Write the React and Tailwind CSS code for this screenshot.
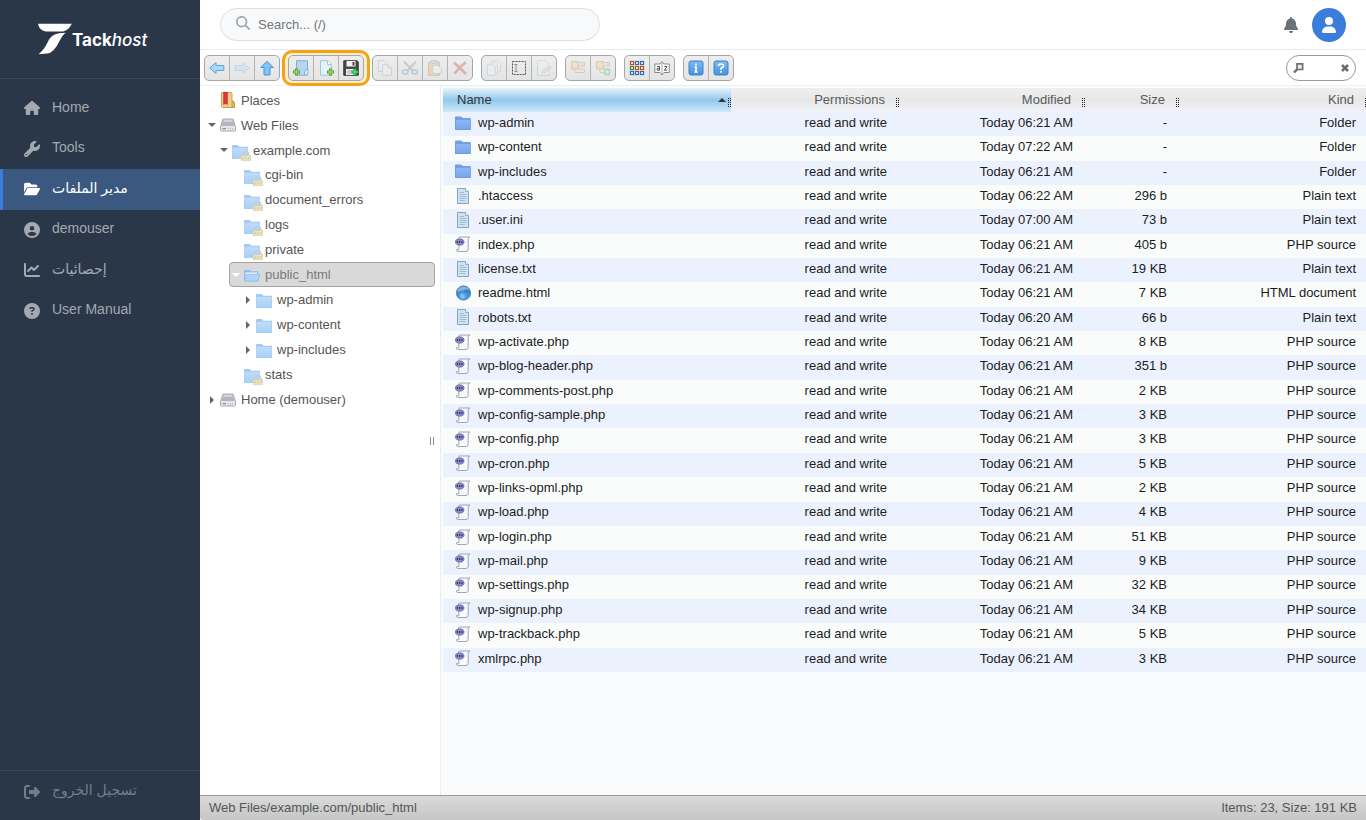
import clsx from "clsx";
import {
	FaBell,
	FaChartLine,
	FaCircleQuestion,
	FaCircleUser,
	FaFolderOpen,
	FaHouse,
	FaMagnifyingGlass,
	FaRightFromBracket,
	FaUser,
	FaWrench,
} from "react-icons/fa6";

const navItems = [
	{ label: "Home", icon: FaHouse },
	{ label: "Tools", icon: FaWrench },
	{ label: "مدير الملفات", icon: FaFolderOpen, active: true },
	{ label: "demouser", icon: FaCircleUser },
	{ label: "إحصائيات", icon: FaChartLine },
	{ label: "User Manual", icon: FaCircleQuestion },
];

const tree = [
	{ label: "Places", indent: "ml-[5px]", icon: "places" },
	{ label: "Web Files", indent: "ml-[5px]", icon: "drive", arrow: "down" },
	{ label: "example.com", indent: "ml-[17px]", icon: "locked", arrow: "down" },
	{ label: "cgi-bin", indent: "ml-[29px]", icon: "locked" },
	{ label: "document_errors", indent: "ml-[29px]", icon: "locked" },
	{ label: "logs", indent: "ml-[29px]", icon: "locked" },
	{ label: "private", indent: "ml-[29px]", icon: "locked" },
	{ label: "public_html", indent: "ml-[29px]", icon: "open", arrow: "down", selected: true },
	{ label: "wp-admin", indent: "ml-[41px]", icon: "pale", arrow: "right" },
	{ label: "wp-content", indent: "ml-[41px]", icon: "pale", arrow: "right" },
	{ label: "wp-includes", indent: "ml-[41px]", icon: "pale", arrow: "right" },
	{ label: "stats", indent: "ml-[29px]", icon: "locked" },
	{ label: "Home (demouser)", indent: "ml-[5px]", icon: "drive", arrow: "right" },
];

const files = [
	["wp-admin", "06:21", "-", "Folder"],
	["wp-content", "07:22", "-", "Folder"],
	["wp-includes", "06:21", "-", "Folder"],
	[".htaccess", "06:22", "296 b", "Plain text"],
	[".user.ini", "07:00", "73 b", "Plain text"],
	["index.php", "06:21", "405 b", "PHP source"],
	["license.txt", "06:21", "19 KB", "Plain text"],
	["readme.html", "06:21", "7 KB", "HTML document"],
	["robots.txt", "06:20", "66 b", "Plain text"],
	["wp-activate.php", "06:21", "8 KB", "PHP source"],
	["wp-blog-header.php", "06:21", "351 b", "PHP source"],
	["wp-comments-post.php", "06:21", "2 KB", "PHP source"],
	["wp-config-sample.php", "06:21", "3 KB", "PHP source"],
	["wp-config.php", "06:21", "3 KB", "PHP source"],
	["wp-cron.php", "06:21", "5 KB", "PHP source"],
	["wp-links-opml.php", "06:21", "2 KB", "PHP source"],
	["wp-load.php", "06:21", "4 KB", "PHP source"],
	["wp-login.php", "06:21", "51 KB", "PHP source"],
	["wp-mail.php", "06:21", "9 KB", "PHP source"],
	["wp-settings.php", "06:21", "32 KB", "PHP source"],
	["wp-signup.php", "06:21", "34 KB", "PHP source"],
	["wp-trackback.php", "06:21", "5 KB", "PHP source"],
	["xmlrpc.php", "06:21", "3 KB", "PHP source"],
];

const Icon16 = ({ children, className }) => (
	<svg viewBox="0 0 16 16" className={clsx("size-4 shrink-0 overflow-visible", className)} fill="none" aria-hidden="true">
		{children}
	</svg>
);

/* file type icons */

const FolderIcon = () => (
	<Icon16>
		<path d="M0 2.5Q0 1.5 1 1.5H6L8 3H15.5V15H0Z" fill="#6f9fe6" />
		<path d="M.5 4.5H15.5V14.5H.5Z" fill="url(#folderFill)" stroke="#6b98df" strokeWidth=".6" />
	</Icon16>
);

const TextIcon = () => (
	<Icon16>
		<path d="M2.5.5H10.5L13.5 3.5V15.5H2.5Z" fill="#cfe3f2" stroke="#86a5bd" />
		<path d="M10.5.5V3.5H13.5" fill="#f3fafd" stroke="#86a5bd" strokeWidth=".8" />
		<path d="M4.5 4.5H9M4.5 6.5H11.5M4.5 8.5H11.5M4.5 10.5H11.5M4.5 12.5H10" stroke="#93b3c9" strokeWidth=".8" />
	</Icon16>
);

const PhpIcon = () => (
	<Icon16>
		<path d="M4.5 1H15L13.2 2.5V13.5Q13 15.5 11 15.5H2.5Q1 15 1.5 13.7H3.8V2Q3.8 1 4.5 1Z" fill="#f7f8fb" stroke="#8b93a0" strokeWidth=".8" />
		<ellipse cx="4.7" cy="6" rx="4.7" ry="3.5" fill="#8c8ac4" />
		<ellipse cx="4.7" cy="6" rx="4.2" ry="3" stroke="#6a68a8" strokeWidth=".6" />
		<path d="M1.8 6H3M4.1 6H5.3M6.4 6H7.6" stroke="#1c1b45" strokeWidth="1.4" />
	</Icon16>
);

const HtmlIcon = () => (
	<Icon16>
		<circle cx="8.5" cy="8" r="7.2" fill="url(#globeFill)" stroke="#4a7dae" strokeWidth=".7" />
		<path d="M3 4.5Q5 1.8 8.5 1.6Q13 2 14.2 5.5Q8 4 3 7Z" fill="#a6c9e8" opacity=".7" />
		<path d="M9 5Q12 3.5 14 5.5L13 8.5L10.5 8Z" fill="#2f78bd" opacity=".6" />
		<path d="M5 9Q9 8 9.5 10.5T8 14.3Q4.5 13 5 9Z" fill="#8fcbf5" opacity=".7" />
	</Icon16>
);

const kindIcons = {
	Folder: FolderIcon,
	"Plain text": TextIcon,
	"PHP source": PhpIcon,
	"HTML document": HtmlIcon,
};

/* tree icons */

const PaleFolder = ({ locked }) => (
	<Icon16 className="mt-[3px]">
		<path d="M0 2Q0 1 1 1H5.5L7.5 2.8H16V15H0Z" fill="#a3c9f0" />
		<path d="M.4 3.8H15.6V14.6H.4Z" fill="url(#paleFill)" />
		{locked && (
			<>
				<path d="M11 11.5V9.5Q11 7.8 13.8 7.8T16.8 9.5V11.5" stroke="#c3ccd4" strokeWidth="1.2" />
				<path d="M9.2 11.5H18.6V16.5H9.2Z" fill="#efe7bd" stroke="#cfc8a8" strokeWidth=".6" />
				<path d="M10.5 15.5L12 12.8M13.2 15.5L14.7 12.8M16 15.5L17.500 12.8" stroke="#b9b08c" strokeWidth=".7" />
			</>
		)}
	</Icon16>
);

const OpenFolder = () => (
	<Icon16>
		<path d="M.5 3H5.5L7 4.3H14V8H.5Z" fill="#8fbce9" />
		<path d="M1.5 5.5H13V8H1.5Z" fill="#eef6fd" />
		<path d="M2.3 7.3H15.8L14.2 14.2H.6Z" fill="#add4f8" stroke="#86b6e6" strokeWidth=".7" />
		<path d="M.5 4V14" stroke="#8fbce9" />
	</Icon16>
);

const DriveIcon = () => (
	<Icon16>
		<path d="M3 2H13L15.5 9.5V13Q15.5 14 14.5 14H1.5Q.5 14 .5 13V9.5Z" fill="#e5e5ea" stroke="#96969e" strokeWidth=".8" />
		<path d="M3.4 2.6H12.6L14.8 9H1.2Z" fill="#b4b4c0" />
		<path d="M4 3H12L12.7 5H3.3Z" fill="#d3d3dd" />
		<path d="M2.5 11.7H6" stroke="#77777f" />
		<path d="M8 11.7H13.5" stroke="#b4b4bc" strokeDasharray="1 1" />
	</Icon16>
);

const PlacesIcon = () => (
	<Icon16>
		<path d="M1.5 1Q1.5.5 2 .5H11Q12 .5 12 2V8.5L14.3 11V15.5H2.5Q1.5 15.5 1.5 14.5Z" fill="#f0d084" stroke="#b98d3e" strokeWidth=".8" />
		<path d="M12 15.5V8.7Q14.5 9 14.3 11V15.5Z" fill="#e0b45c" stroke="#b98d3e" strokeWidth=".7" />
		<path d="M3.7.3H7.3V12.5L5.5 11.2L3.7 12.5Z" fill="#e8343a" stroke="#ae1a20" strokeWidth=".6" />
	</Icon16>
);

const TreeIcon = ({ name }) => {
	if (name === "places") return <PlacesIcon />;
	if (name === "drive") return <DriveIcon />;
	if (name === "open") return <OpenFolder />;
	return <PaleFolder locked={name === "locked"} />;
};

/* toolbar icons */

const Plus = ({ x, y, color = "#9bd96a", edge = "#4a9425" }) => (
	<>
		<path d={`M${x} ${y - 3.5}v7M${x - 3.5} ${y}h7`} stroke={edge} strokeWidth="3" />
		<path d={`M${x} ${y - 2.8}v5.6M${x - 2.8} ${y}h5.6`} stroke={color} strokeWidth="1.6" />
	</>
);

const BackIcon = () => (
	<Icon16>
		<path d="M.8 8L7 2.5V5.5H14.8V10.5H7V13.5Z" fill="#a9d8fa" stroke="#5fa5d8" />
	</Icon16>
);
const ForwardIcon = () => (
	<Icon16>
		<path d="M15.2 8L9 2.5V5.5H1.2V10.5H9V13.5Z" fill="#a9d8fa" stroke="#5fa5d8" />
	</Icon16>
);
const UpIcon = () => (
	<Icon16>
		<path d="M8 1.2L14.2 7.5H11V15H5V7.5H1.8Z" fill="#7fc3f8" stroke="#4a95d2" />
	</Icon16>
);
const NewFolderIcon = () => (
	<Icon16>
		<path d="M3.5.7H14.5V15.2H3.5Z" fill="#b5d6ee" stroke="#86aecd" />
		<path d="M11.5 15V11.5L13 9.5H15V13.5L13.5 15.5Z" fill="#cfe6f6" stroke="#7ba8ca" strokeWidth=".8" />
		<Plus x={3.5} y={12} />
	</Icon16>
);
const NewFileIcon = () => (
	<Icon16>
		<path d="M2.5.7H9.5L13.3 4.5V15.2H2.5Z" fill="#e4f2fb" stroke="#a3c6dc" />
		<path d="M9.5.7V4.5H13.3" fill="#fff" stroke="#a3c6dc" />
		<Plus x={12.5} y={12} />
	</Icon16>
);
const SaveIcon = () => (
	<Icon16>
		<path d="M.8.8H14.2L15.2 2V15.2H.8Z" fill="#4a4a4a" stroke="#303030" />
		<path d="M3.5 1H12.5V6.5H3.5Z" fill="#f2f2f2" />
		<path d="M9.5 2H11.5V5.5H9.5Z" fill="#444" />
		<path d="M3 9H13V15H3Z" fill="#e9e9e9" />
		<path d="M4.5 11H9M4.5 13H8" stroke="#999" strokeWidth=".8" />
		<Plus x={12} y={12} color="#4be07a" edge="#12983f" />
	</Icon16>
);
const CopyIcon = () => (
	<Icon16>
		<path d="M1.5.7H7L9.5 3.2V11.5H1.5Z" fill="#eef4f7" stroke="#8aa5b5" />
		<path d="M5.5 4.7H11L14.5 8.2V15.3H5.5Z" fill="#eef4f7" stroke="#8aa5b5" />
		<path d="M11 4.7V8.2H14.5" stroke="#8aa5b5" />
	</Icon16>
);
const CutIcon = () => (
	<Icon16>
		<path d="M2 1.5L11 11M14 1.5L5 11" stroke="#75818a" strokeWidth="2" />
		<ellipse cx="3.2" cy="12" rx="2.7" ry="2" stroke="#4488c0" strokeWidth="1.6" />
		<ellipse cx="12.8" cy="12" rx="2.7" ry="2" stroke="#4488c0" strokeWidth="1.6" />
	</Icon16>
);
const PasteIcon = () => (
	<Icon16>
		<path d="M1.5 2H12.5V15.3H1.5Z" fill="#dba565" stroke="#a87232" />
		<path d="M4.5.6H9.5V3.5H4.5Z" fill="#bbb" stroke="#888" />
		<path d="M5.5 5.5H11L14.5 9V13.5H5.5Z" fill="#f3f5f7" stroke="#94a0a8" />
	</Icon16>
);
const DeleteIcon = () => (
	<Icon16>
		<path d="M2 2.5Q7 7 14 14M14 2Q8 6.5 2.5 13.5" stroke="#b5322c" strokeWidth="2.6" />
	</Icon16>
);
const DuplicateIcon = () => (
	<Icon16>
		<path d="M6.5.7H12L14.5 3.2V11.5H6.5Z" fill="#eef5f8" stroke="#93b4c4" />
		<path d="M4 2.7H9.5L11.5 4.7V13.5H4Z" fill="#eef5f8" stroke="#93b4c4" />
		<path d="M1.5 4.7H7L9.2 7V15.3H1.5Z" fill="#eef5f8" stroke="#93b4c4" />
	</Icon16>
);
const RenameIcon = () => (
	<Icon16>
		<path d="M1.5 1.5H14.5V14.5H1.5Z" stroke="#555" strokeDasharray="2 1" />
		<path d="M3.5 4.5H6.5M5 4.5V11.5M3.5 11.5H6.5" stroke="#888" strokeWidth=".9" />
	</Icon16>
);
const EditIcon = () => (
	<Icon16>
		<path d="M1.5.7H9L13 4.7V15.3H1.5Z" fill="#eaf3f8" stroke="#9ab8c8" />
		<path d="M6 13L7 10.5L13 6L15 8L9 12.5Z" fill="#e0dc9c" stroke="#8c9a7c" strokeWidth=".8" />
	</Icon16>
);
const ExtractIcon = ({ plus }) => (
	<Icon16>
		<path d="M1.5 1.5H8.5V9H1.5Z" fill="#f2b666" stroke="#c97c32" />
		<path d="M2 5H8M5 2V8.5" stroke="#e8dbc0" />
		<path d="M8.5 2.5H14.5V6H9M5 9V12.5H14.5V9H9" stroke="#9a8878" />
		<path d="M11 4.3H14" stroke="#e4b68e" strokeWidth="2" />
		{plus && <circle cx="12" cy="12" r="3.5" fill="#2fb548" />}
		{plus && <path d="M12 9.8V14.2M9.8 12H14.2" stroke="#d5f7da" strokeWidth="1.3" />}
	</Icon16>
);

const gridColors = [
	["#b2531f", "#3767a8", "#3767a8"],
	["#3c8340", "#b2531f", "#b2531f"],
	["#3767a8", "#3767a8", "#3767a8"],
];

const GridIcon = () => (
	<Icon16>
		{gridColors.map((row, y) =>
			row.map((color, x) => (
				<rect
					key={`${x}-${y}`}
					x={1.5 + x * 5}
					y={1.5 + y * 5}
					width="3"
					height="3"
					fill="#fff"
					stroke={color}
					strokeWidth="1.2"
				/>
			))
		)}
	</Icon16>
);
const SortIcon = () => (
	<Icon16>
		<path d="M.8 4H6L8 1.5L10 4H15.2V12.5H10L8 15L6 12.5H.8Z" fill="#fff" stroke="#888" />
		<path d="M8 3V14" stroke="#aaa" />
		<path d="M3 6.5H5.5V10.2H3.2V8.3H5.5M10.3 6.5H13L10.3 10.2H13.2" stroke="#555" />
	</Icon16>
);
const BlueTile = ({ children }) => (
	<Icon16>
		<rect x="1" y="1" width="14" height="14" rx="2" fill="url(#tileFill)" stroke="#3f82c6" />
		{children}
	</Icon16>
);
const InfoIcon = () => (
	<BlueTile>
		<path d="M8 3.5V5.3M6.5 7H8V11.8M6.300 12H9.8" stroke="#fff" strokeWidth="1.7" />
	</BlueTile>
);
const HelpIcon = () => (
	<BlueTile>
		<path d="M5.5 6Q5.5 4 8 4T10.5 6Q10.5 7.3 8 8.3V9.8M8 11V12.7" stroke="#fff" strokeWidth="1.7" />
	</BlueTile>
);

const toolbar = [
	[
		{ label: "Back", icon: BackIcon },
		{ label: "Forward", icon: ForwardIcon, disabled: true },
		{ label: "Up", icon: UpIcon },
	],
	[
		{ label: "New folder", icon: NewFolderIcon },
		{ label: "New file", icon: NewFileIcon },
		{ label: "Upload files", icon: SaveIcon },
	],
	[
		{ label: "Copy", icon: CopyIcon, disabled: true },
		{ label: "Cut", icon: CutIcon, disabled: true },
		{ label: "Paste", icon: PasteIcon, disabled: true },
		{ label: "Delete", icon: DeleteIcon, disabled: true },
	],
	[
		{ label: "Duplicate", icon: DuplicateIcon, disabled: true },
		{ label: "Rename", icon: RenameIcon },
		{ label: "Edit file", icon: EditIcon, disabled: true },
	],
	[
		{ label: "Extract", icon: ExtractIcon, disabled: true },
		{ label: "Archive", icon: () => <ExtractIcon plus />, disabled: true },
	],
	[
		{ label: "Icons view", icon: GridIcon },
		{ label: "Sort", icon: SortIcon },
	],
	[
		{ label: "About", icon: InfoIcon },
		{ label: "Help", icon: HelpIcon },
	],
];

const Sidebar = () => (
	<aside className="flex w-[200px] shrink-0 flex-col bg-[#2a3749] text-sm text-[#a3a9b1]">
		<a href="#" className="flex h-[79px] items-center border-b border-[#37465a] pl-[37px] text-white">
			<svg viewBox="0 0 35 32" className="h-8 w-[35px]" fill="currentColor" aria-hidden="true">
				<path d="M1 .8H34.8Q31.5 7.5 26 8.5H9Q2.5 8 1 .8Z" />
				<path d="M28.5 9.8Q24.5 13 22.5 18Q17 30 10 30.6L1.500 31.2Q7 27 10.5 19.5Q14 11 22 10.2Z" />
			</svg>
			<span className="pt-[3px] font-[Inter] text-[17px] font-bold">
				Tack<span className="font-medium italic">host</span>
			</span>
		</a>
		<nav className="mt-[9px] grid h-[243px] auto-rows-fr">
			{navItems.map(({ label, icon: NavIcon, active }) => (
				<a
					key={label}
					href="#"
					className={clsx(
						"flex items-center gap-3 border-l-[3px] pl-[21px]",
						active ? "border-[#3b7ddd] bg-[#3b5980] text-white" : "border-transparent"
					)}
				>
					<NavIcon className="size-4" />
					<span className="pb-[3px]">{label}</span>
				</a>
			))}
		</nav>
		<a href="#" className="mt-auto flex h-[50px] items-center gap-3 border-t border-[#37465a] pb-2 pl-6 text-[#737d8a]">
			<FaRightFromBracket className="size-4" />
			<span className="pb-[3px]">تسجيل الخروج</span>
		</a>
	</aside>
);

const Header = () => (
	<header className="flex h-[50px] shrink-0 items-center border-b border-[#e9ebee] bg-white px-5">
		<label className="flex h-[33px] w-[380px] items-center gap-2 rounded-full border border-[#dcdfe2] bg-[#f8f9fb] pl-[15px]">
			<FaMagnifyingGlass className="mb-[3px] size-3.5 text-[#a3a6ab]" />
			<input
				type="text"
				aria-label="Search"
				placeholder="Search... (/)"
				className="grow bg-transparent text-[13px] outline-none placeholder:text-[#757575]"
			/>
		</label>
		<button type="button" aria-label="Notifications" className="ml-auto text-[#6b7178]">
			<FaBell className="size-4" />
		</button>
		<button
			type="button"
			aria-label="Account"
			className="ml-[13px] flex size-[34px] items-center justify-center rounded-full bg-[#3b7ddd] text-white"
		>
			<FaUser className="size-4" />
		</button>
	</header>
);

const Toolbar = () => (
	<div className="flex h-9 shrink-0 items-center gap-2 border-b border-[#eef1f3] bg-white pr-2.5 pl-1">
		{toolbar.map((group, index) => (
			<div key={group[0].label} className="relative">
				{index === 1 && (
					<div className="pointer-events-none absolute -inset-x-1.5 -inset-y-[5px] rounded-[10px] border-[3px] border-[#f2a31d] bg-[#fdeecb]" />
				)}
				<div className="relative flex h-[26px] divide-x divide-[#b4b4b4] overflow-hidden rounded-[5px] border border-[#a6a6a6] bg-linear-to-b from-[#eee] to-[#e4e4e4]">
					{group.map(({ label, icon: ToolIcon, disabled }, i) => (
						<button
							key={label}
							type="button"
							aria-label={label}
							disabled={disabled}
							className={clsx("flex items-center justify-center", i === group.length - 1 ? "w-6" : "w-[25px]")}
						>
							<span className={clsx(disabled && "opacity-30")}>
								<ToolIcon />
							</span>
						</button>
					))}
				</div>
			</div>
		))}
		<label className="ml-auto flex h-[26px] w-[70px] items-center rounded-full border border-[#9a9a9a] bg-white px-1.5">
			<svg viewBox="0 0 12 12" className="size-3 shrink-0" fill="none" stroke="#6e6e6e" aria-hidden="true">
				<path d="M4 1.9H9.6V7.5H4Z" fill="#eee" strokeWidth="1.7" />
				<path d="M4.5 7L1 10.5" strokeWidth="2.4" />
			</svg>
			<input type="text" aria-label="Filter files" className="w-0 grow bg-transparent text-[13px] outline-none" />
			<button type="button" aria-label="Clear">
				<svg viewBox="0 0 8 8" className="size-2" stroke="#6e6e6e" strokeWidth="2.6" aria-hidden="true">
					<path d="M1 1L7 7M7 1L1 7" />
				</svg>
			</button>
		</label>
	</div>
);

const TreeArrow = ({ dir, light }) => (
	<span className="flex w-3 shrink-0 items-center">
		{dir && (
			<svg viewBox="0 0 8 8" className="size-2" fill={light ? "#fff" : "#666"} aria-hidden="true">
				<path d={dir === "down" ? "M0 2H8L4 6Z" : "M2 0L6 4L2 8Z"} />
			</svg>
		)}
	</span>
);

const TreePane = () => (
	<aside className="relative w-[241px] shrink-0 border-r border-[#e9edf0] bg-white pt-[2px]">
		<ul className="grid h-[324px] auto-rows-fr text-[13px] text-[#555]">
			{tree.map(({ label, indent, icon, arrow, selected }) => (
				<li key={label} className={clsx("mr-[5px]", indent)}>
					<a
						href="#"
						className={clsx(
							"flex h-full items-center rounded-[4px] border px-0.5",
							selected ? "border-[#a3a3a3] bg-[#d9d9d9] text-[#7b7b7b]" : "border-transparent"
						)}
					>
						<TreeArrow dir={arrow} light={selected} />
						<TreeIcon name={icon} />
						<span className="ml-[5px]">{label}</span>
					</a>
				</li>
			))}
		</ul>
		<div className="absolute top-1/2 right-1.5 h-2 w-1 -translate-y-1/2 border-x border-[#8a8a8a]" />
	</aside>
);

const columns = [
	{ label: "Name", width: "w-auto" },
	{ label: "Permissions", width: "w-[168px]" },
	{ label: "Modified", width: "w-[186px]" },
	{ label: "Size", width: "w-[94px]" },
	{ label: "Kind", width: "w-[187px]" },
];

const Grip = ({ last }) => (
	<svg
		viewBox="0 0 3 10"
		className={clsx("absolute bottom-1 h-2.5 w-[3px]", last ? "-right-0.5" : "right-0")}
		stroke="#222"
		strokeDasharray="1 1"
		shapeRendering="crispEdges"
		aria-hidden="true"
	>
		<path d="M.5 0V10M2.5 0V10" />
	</svg>
);

const FileTable = () => (
	<table className="h-[584px] w-full table-fixed text-[13px] text-[#1c1c1c]">
		<thead>
			<tr className="h-6 text-[#5a5a5a]">
				{columns.map(({ label, width }, i) => (
					<th
						key={label}
						className={clsx(
							"relative p-0 font-normal",
							width,
							i === 0
								? "bg-linear-to-b from-[#e6f3fa] via-[#92c8ec] to-[#cfe9fa] pl-3.5 text-left text-[#333]"
								: "bg-linear-to-b from-[#efefef] via-[#e8e8e8] to-[#f0f2f8] text-right",
							i > 0 && (i === 4 ? "pr-3" : "pr-3.5")
						)}
					>
						{label}
						{i === 0 && (
							<svg viewBox="0 0 8 4" className="absolute top-2.5 right-[5px] h-1 w-2" fill="#333" aria-hidden="true">
								<path d="M4 0L8 4H0Z" />
							</svg>
						)}
						<Grip last={i === 4} />
					</th>
				))}
			</tr>
		</thead>
		<tbody>
			{files.map(([name, time, size, kind]) => {
				const KindIcon = kindIcons[kind];
				return (
					<tr key={name} className="odd:bg-[#ecf1fe] even:bg-[#fafcfc]">
						<td className="p-0 pb-[3px] pl-3">
							<span className="flex items-center gap-[7px]">
								<KindIcon />
								{name}
							</span>
						</td>
						<td className="p-0 pr-3 pb-[3px] text-right">read and write</td>
						<td className="p-0 pr-3 pb-[3px] text-right">Today {time} AM</td>
						<td className="p-0 pr-3 pb-[3px] text-right">{size}</td>
						<td className="p-0 pr-2.5 pb-[3px] text-right">{kind}</td>
					</tr>
				);
			})}
		</tbody>
	</table>
);

const App = () => {
	return (
		<div className="flex h-screen overflow-hidden font-['Liberation_Sans','DejaVu_Sans',sans-serif]">
			{/* shared gradients */}
			<svg className="absolute size-0" aria-hidden="true">
				<defs>
					<linearGradient id="folderFill" x2="0" y2="1">
						<stop stopColor="#8fb9f6" />
						<stop offset="1" stopColor="#78a3e8" />
					</linearGradient>
					<linearGradient id="paleFill" x2="0" y2="1">
						<stop stopColor="#c0dcf8" />
						<stop offset="1" stopColor="#a9cff7" />
					</linearGradient>
					<linearGradient id="tileFill" x2="0" y2="1">
						<stop stopColor="#7dbcf3" />
						<stop offset="1" stopColor="#4690dd" />
					</linearGradient>
					<radialGradient id="globeFill" cx=".5" cy=".7">
						<stop stopColor="#5bb0ee" />
						<stop offset="1" stopColor="#3a82c6" />
					</radialGradient>
				</defs>
			</svg>
			<Sidebar />
			<div className="flex min-w-0 grow flex-col">
				<Header />
				<Toolbar />
				<div className="flex min-h-0 grow">
					<TreePane />
					<main className="min-w-0 grow overflow-hidden bg-[#fafbfc] pt-0.5 pl-0.5">
						<FileTable />
					</main>
				</div>
				<footer className="flex h-[25px] shrink-0 items-center justify-between rounded-bl-[3px] border-t border-[#9a9a9a] bg-linear-to-b from-[#dadada] to-[#c6c6c6] px-[9px] text-[13px] text-[#555]">
					<span>Web Files/example.com/public_html</span>
					<span>Items: 23, Size: 191 KB</span>
				</footer>
			</div>
		</div>
	);
};

export default App;
